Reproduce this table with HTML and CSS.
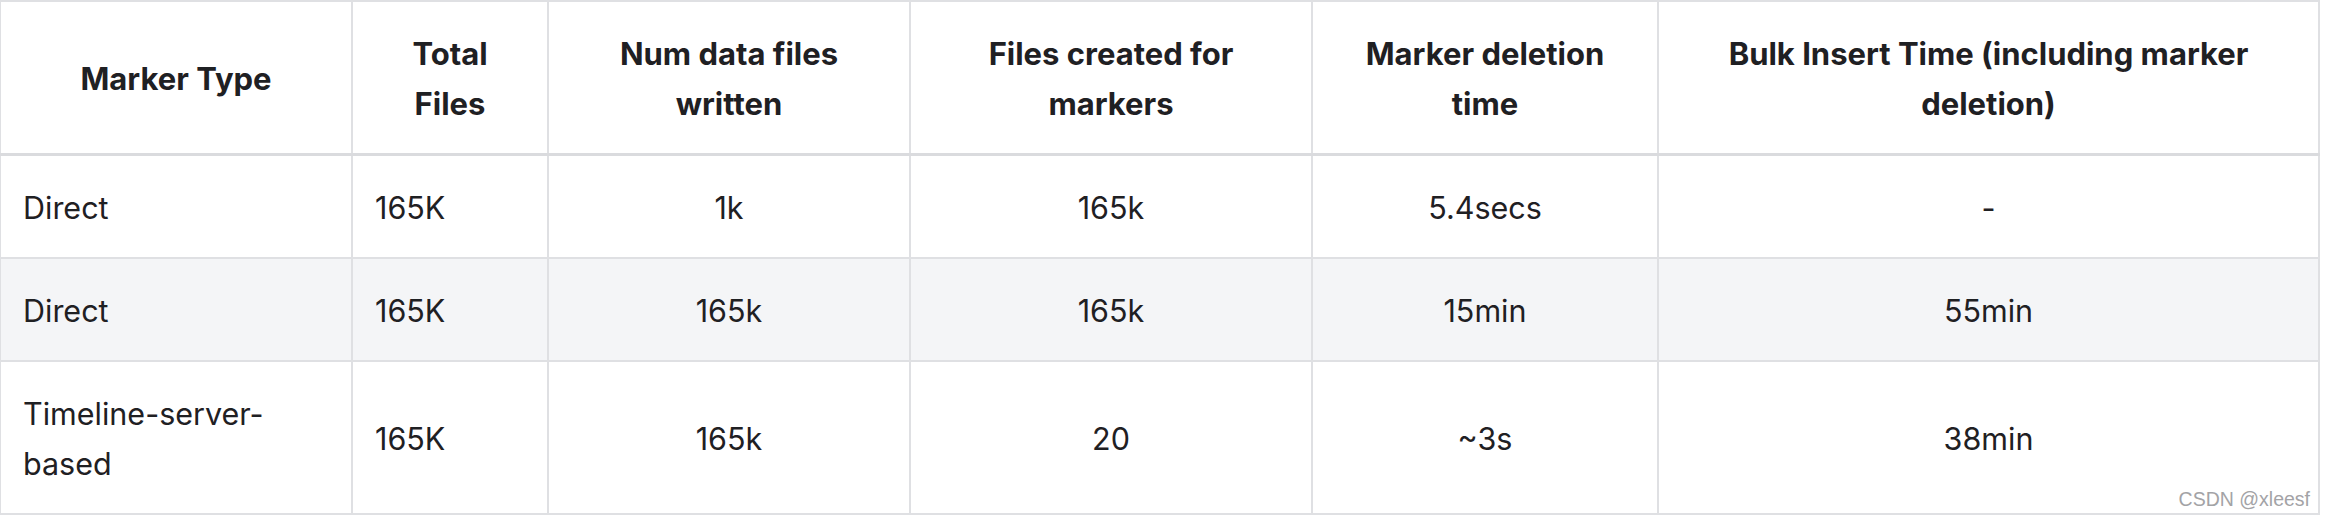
FILE: index.html
```html
<!DOCTYPE html>
<html lang="en">
<head>
<meta charset="utf-8">
<title>Marker types</title>
<link rel="stylesheet" href="styles.css">
</head>
<body>
<div class="frame">
  <table class="data">
    <colgroup>
      <col class="c1"><col class="c2"><col class="c3"><col class="c4"><col class="c5"><col class="c6">
    </colgroup>
    <thead>
      <tr>
        <th>Marker Type</th>
        <th>Total<br>Files</th>
        <th>Num data files<br>written</th>
        <th>Files created for<br>markers</th>
        <th>Marker deletion<br>time</th>
        <th>Bulk Insert Time (including marker<br>deletion)</th>
      </tr>
    </thead>
    <tbody>
      <tr>
        <td class="left">Direct</td>
        <td class="left">165K</td>
        <td>1k</td>
        <td>165k</td>
        <td>5.4secs</td>
        <td>-</td>
      </tr>
      <tr class="alt">
        <td class="left">Direct</td>
        <td class="left">165K</td>
        <td>165k</td>
        <td>165k</td>
        <td>15min</td>
        <td>55min</td>
      </tr>
      <tr>
        <td class="left">Timeline-server-<br>based</td>
        <td class="left">165K</td>
        <td>165k</td>
        <td>20</td>
        <td>~3s</td>
        <td>38min</td>
      </tr>
    </tbody>
  </table>
  <span class="watermark">CSDN @xleesf</span>
</div>
</body>
</html>
```
FILE: styles.css
```css
html, body {
  margin: 0;
  padding: 0;
  background: #ffffff;
}

.frame {
  position: relative;
  width: 2326px;
  height: 516px;
  overflow: hidden;
}

.data {
  border-collapse: collapse;
  table-layout: fixed;
  width: 2319px;
  margin-left: -1px;
  font-family: Inter, "Noto Sans", sans-serif;
  font-size: 30.5px;
  line-height: 50px;
  color: #1f2023;
}

.c1 { width: 352px; }
.c2 { width: 196px; }
.c3 { width: 362px; }
.c4 { width: 402px; }
.c5 { width: 346px; }
.c6 { width: 661px; }

.data th,
.data td {
  border: 2px solid #dfe0e3;
  padding: 27px 22px 24px;
  text-align: center;
  vertical-align: middle;
}

.data th {
  font-weight: 700;
  font-size: 31px;
  border-bottom: 3px solid #dadbde;
}

.data td.left {
  text-align: left;
}

.data tr.alt td {
  background: #f4f5f7;
}

.watermark {
  position: absolute;
  right: 16px;
  bottom: 6px;
  font-family: "Liberation Sans", Arial, sans-serif;
  font-size: 19.5px;
  line-height: 22px;
  color: #a3a3a6;
}
```
